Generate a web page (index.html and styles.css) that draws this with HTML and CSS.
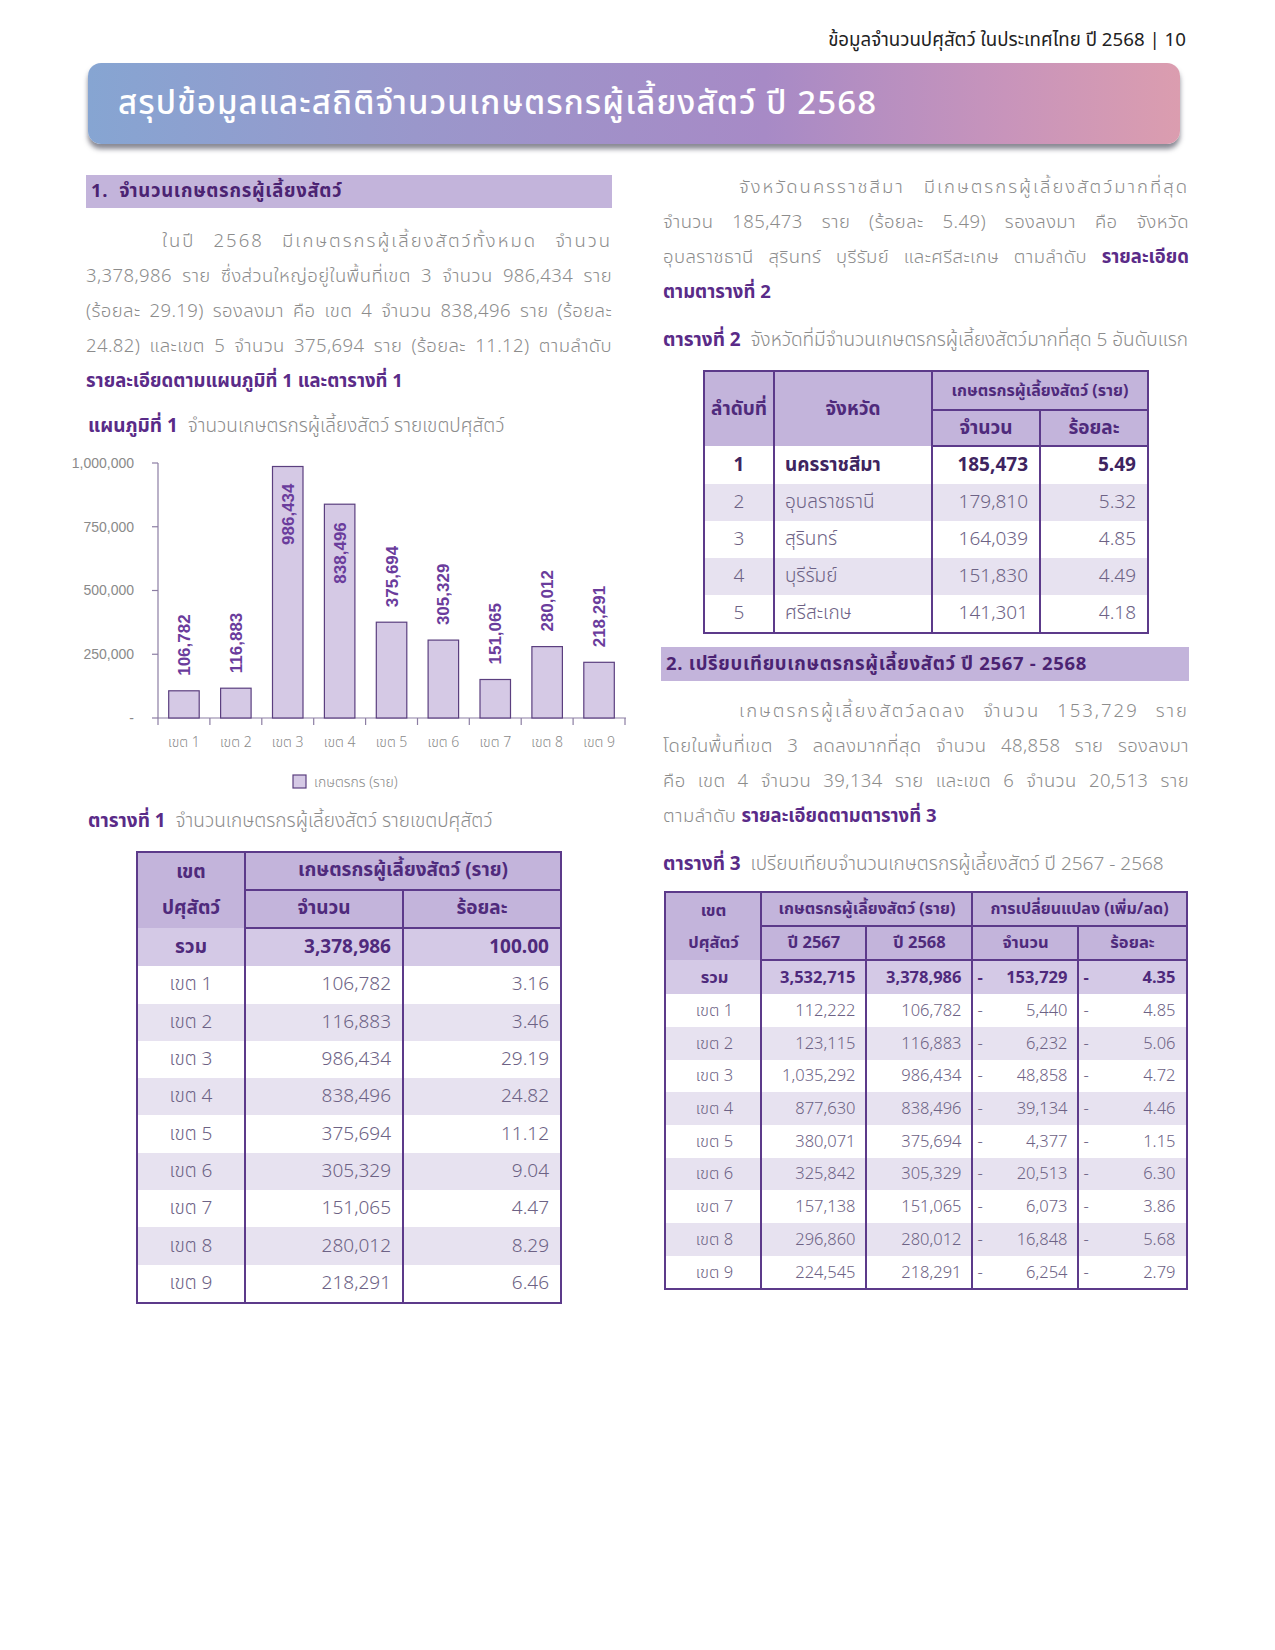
FILE: index.html
```html
<!DOCTYPE html>
<html lang="th">
<head>
<meta charset="utf-8">
<link rel="stylesheet" href="styles.css">
<title>สรุปข้อมูลและสถิติจำนวนเกษตรกรผู้เลี้ยงสัตว์ ปี 2568</title>
</head>
<body>
<div class="page">
  <div class="runhead">ข้อมูลจำนวนปศุสัตว์ ในประเทศไทย ปี 2568 | 10</div>
  <div class="banner"><h1>สรุปข้อมูลและสถิติจำนวนเกษตรกรผู้เลี้ยงสัตว์ ปี 2568</h1></div>

  <div class="cols">
    <div class="col left">
      <div class="secbar">1.&nbsp; จำนวนเกษตรกรผู้เลี้ยงสัตว์</div>
      <div class="para">
        <span class="ln first sparse">ในปี 2568 มีเกษตรกรผู้เลี้ยงสัตว์ทั้งหมด จำนวน</span>
        <span class="ln">3,378,986 ราย ซึ่งส่วนใหญ่อยู่ในพื้นที่เขต 3 จำนวน 986,434 ราย</span>
        <span class="ln">(ร้อยละ 29.19) รองลงมา คือ เขต 4 จำนวน 838,496 ราย (ร้อยละ</span>
        <span class="ln">24.82) และเขต 5 จำนวน 375,694 ราย (ร้อยละ 11.12) ตามลำดับ</span>
        <span class="ln last"><b>รายละเอียดตามแผนภูมิที่ 1 และตารางที่ 1</b></span>
      </div>
      <div class="caption cap-chart"><b>แผนภูมิที่ 1</b>&nbsp; จำนวนเกษตรกรผู้เลี้ยงสัตว์ รายเขตปศุสัตว์</div>
      <svg class="chart" width="580" height="355" viewBox="0 0 580 355">
        <g class="ylab">
          <text x="74" y="24">1,000,000</text>
          <text x="74" y="88">750,000</text>
          <text x="74" y="151">500,000</text>
          <text x="74" y="215">250,000</text>
          <text x="74" y="279">-</text>
        </g>
        <g class="axis">
          <line x1="98" y1="19" x2="98" y2="281"/>
          <line x1="98" y1="274" x2="566" y2="274"/>
          <line x1="92" y1="19" x2="98" y2="19"/>
          <line x1="92" y1="82.75" x2="98" y2="82.75"/>
          <line x1="92" y1="146.5" x2="98" y2="146.5"/>
          <line x1="92" y1="210.25" x2="98" y2="210.25"/>
          <line x1="92" y1="274" x2="98" y2="274"/>
          <line x1="149.9" y1="274" x2="149.9" y2="281"/>
          <line x1="201.8" y1="274" x2="201.8" y2="281"/>
          <line x1="253.7" y1="274" x2="253.7" y2="281"/>
          <line x1="305.6" y1="274" x2="305.6" y2="281"/>
          <line x1="357.5" y1="274" x2="357.5" y2="281"/>
          <line x1="409.3" y1="274" x2="409.3" y2="281"/>
          <line x1="461.2" y1="274" x2="461.2" y2="281"/>
          <line x1="513.1" y1="274" x2="513.1" y2="281"/>
          <line x1="565" y1="274" x2="565" y2="281"/>
        </g>
        <g class="bars">
          <rect x="108.7" y="246.8" width="30.5" height="27.2"/>
          <rect x="160.6" y="244.2" width="30.5" height="29.8"/>
          <rect x="212.5" y="22.5" width="30.5" height="251.5"/>
          <rect x="264.4" y="60.2" width="30.5" height="213.8"/>
          <rect x="316.3" y="178.2" width="30.5" height="95.8"/>
          <rect x="368.1" y="196.1" width="30.5" height="77.9"/>
          <rect x="420.0" y="235.5" width="30.5" height="38.5"/>
          <rect x="471.9" y="202.6" width="30.5" height="71.4"/>
          <rect x="523.8" y="218.3" width="30.5" height="55.7"/>
        </g>
        <g class="vlab">
          <text class="out" transform="translate(130,231.8) rotate(-90)">106,782</text>
          <text class="out" transform="translate(181.8,229.2) rotate(-90)">116,883</text>
          <text class="in" transform="translate(233.7,39.5) rotate(-90)">986,434</text>
          <text class="in" transform="translate(285.6,78.2) rotate(-90)">838,496</text>
          <text class="out" transform="translate(337.5,163.2) rotate(-90)">375,694</text>
          <text class="out" transform="translate(389.4,181.1) rotate(-90)">305,329</text>
          <text class="out" transform="translate(441.3,220.5) rotate(-90)">151,065</text>
          <text class="out" transform="translate(493.2,187.6) rotate(-90)">280,012</text>
          <text class="out" transform="translate(545.1,203.3) rotate(-90)">218,291</text>
        </g>
        <g class="xlab">
          <text x="123.9" y="303">เขต 1</text>
          <text x="175.8" y="303">เขต 2</text>
          <text x="227.7" y="303">เขต 3</text>
          <text x="279.6" y="303">เขต 4</text>
          <text x="331.5" y="303">เขต 5</text>
          <text x="383.4" y="303">เขต 6</text>
          <text x="435.3" y="303">เขต 7</text>
          <text x="487.2" y="303">เขต 8</text>
          <text x="539.1" y="303">เขต 9</text>
        </g>
        <rect class="legbox" x="233" y="331" width="13" height="13"/>
        <text class="legtext" x="254" y="343">เกษตรกร (ราย)</text>
      </svg>
      <div class="caption cap-t1"><b>ตารางที่ 1</b>&nbsp; จำนวนเกษตรกรผู้เลี้ยงสัตว์ รายเขตปศุสัตว์</div>
      <table class="tbl t1">
        <colgroup><col class="c1"><col class="c2"><col class="c3"></colgroup>
        <thead>
          <tr><th rowspan="2">เขต<br>ปศุสัตว์</th><th colspan="2" class="grp">เกษตรกรผู้เลี้ยงสัตว์ (ราย)</th></tr>
          <tr><th>จำนวน</th><th>ร้อยละ</th></tr>
        </thead>
        <tbody>
          <tr class="total"><td class="ctr">รวม</td><td class="num">3,378,986</td><td class="num">100.00</td></tr>
          <tr><td class="ctr">เขต 1</td><td class="num">106,782</td><td class="num">3.16</td></tr>
          <tr><td class="ctr">เขต 2</td><td class="num">116,883</td><td class="num">3.46</td></tr>
          <tr><td class="ctr">เขต 3</td><td class="num">986,434</td><td class="num">29.19</td></tr>
          <tr><td class="ctr">เขต 4</td><td class="num">838,496</td><td class="num">24.82</td></tr>
          <tr><td class="ctr">เขต 5</td><td class="num">375,694</td><td class="num">11.12</td></tr>
          <tr><td class="ctr">เขต 6</td><td class="num">305,329</td><td class="num">9.04</td></tr>
          <tr><td class="ctr">เขต 7</td><td class="num">151,065</td><td class="num">4.47</td></tr>
          <tr><td class="ctr">เขต 8</td><td class="num">280,012</td><td class="num">8.29</td></tr>
          <tr><td class="ctr">เขต 9</td><td class="num">218,291</td><td class="num">6.46</td></tr>
        </tbody>
      </table>
    </div>

    <div class="col right">
      <div class="para">
        <span class="ln first sparse">จังหวัดนครราชสีมา มีเกษตรกรผู้เลี้ยงสัตว์มากที่สุด</span>
        <span class="ln">จำนวน 185,473 ราย (ร้อยละ 5.49) รองลงมา คือ จังหวัด</span>
        <span class="ln">อุบลราชธานี สุรินทร์ บุรีรัมย์ และศรีสะเกษ ตามลำดับ <b>รายละเอียด</b></span>
        <span class="ln last"><b>ตามตารางที่ 2</b></span>
      </div>
      <div class="caption cap-t2"><b>ตารางที่ 2</b>&nbsp; จังหวัดที่มีจำนวนเกษตรกรผู้เลี้ยงสัตว์มากที่สุด 5 อันดับแรก</div>
      <table class="tbl t2">
        <colgroup><col class="c1"><col class="c2"><col class="c3"><col class="c4"></colgroup>
        <thead>
          <tr><th rowspan="2">ลำดับที่</th><th rowspan="2">จังหวัด</th><th colspan="2" class="grp small">เกษตรกรผู้เลี้ยงสัตว์ (ราย)</th></tr>
          <tr><th>จำนวน</th><th>ร้อยละ</th></tr>
        </thead>
        <tbody>
          <tr class="top"><td class="ctr">1</td><td class="name">นครราชสีมา</td><td class="num">185,473</td><td class="num">5.49</td></tr>
          <tr><td class="ctr">2</td><td class="name">อุบลราชธานี</td><td class="num">179,810</td><td class="num">5.32</td></tr>
          <tr><td class="ctr">3</td><td class="name">สุรินทร์</td><td class="num">164,039</td><td class="num">4.85</td></tr>
          <tr><td class="ctr">4</td><td class="name">บุรีรัมย์</td><td class="num">151,830</td><td class="num">4.49</td></tr>
          <tr><td class="ctr">5</td><td class="name">ศรีสะเกษ</td><td class="num">141,301</td><td class="num">4.18</td></tr>
        </tbody>
      </table>

      <div class="secbar sec2">2. เปรียบเทียบเกษตรกรผู้เลี้ยงสัตว์ ปี 2567 - 2568</div>
      <div class="para">
        <span class="ln first sparse">เกษตรกรผู้เลี้ยงสัตว์ลดลง จำนวน 153,729 ราย</span>
        <span class="ln">โดยในพื้นที่เขต 3 ลดลงมากที่สุด จำนวน 48,858 ราย รองลงมา</span>
        <span class="ln">คือ เขต 4 จำนวน 39,134 ราย และเขต 6 จำนวน 20,513 ราย</span>
        <span class="ln last">ตามลำดับ <b>รายละเอียดตามตารางที่ 3</b></span>
      </div>
      <div class="caption cap-t3"><b>ตารางที่ 3</b>&nbsp; เปรียบเทียบจำนวนเกษตรกรผู้เลี้ยงสัตว์ ปี 2567 - 2568</div>
      <table class="tbl t3">
        <colgroup><col class="c1"><col class="c2"><col class="c3"><col class="c4"><col class="c5"></colgroup>
        <thead>
          <tr><th rowspan="2">เขต<br>ปศุสัตว์</th><th colspan="2" class="grp">เกษตรกรผู้เลี้ยงสัตว์ (ราย)</th><th colspan="2" class="grp">การเปลี่ยนแปลง (เพิ่ม/ลด)</th></tr>
          <tr><th>ปี 2567</th><th>ปี 2568</th><th>จำนวน</th><th>ร้อยละ</th></tr>
        </thead>
        <tbody>
          <tr class="total"><td class="ctr">รวม</td><td class="num">3,532,715</td><td class="num">3,378,986</td><td class="num"><span class="dash">-</span>153,729</td><td class="num"><span class="dash">-</span>4.35</td></tr>
          <tr><td class="ctr">เขต 1</td><td class="num">112,222</td><td class="num">106,782</td><td class="num"><span class="dash">-</span>5,440</td><td class="num"><span class="dash">-</span>4.85</td></tr>
          <tr><td class="ctr">เขต 2</td><td class="num">123,115</td><td class="num">116,883</td><td class="num"><span class="dash">-</span>6,232</td><td class="num"><span class="dash">-</span>5.06</td></tr>
          <tr><td class="ctr">เขต 3</td><td class="num">1,035,292</td><td class="num">986,434</td><td class="num"><span class="dash">-</span>48,858</td><td class="num"><span class="dash">-</span>4.72</td></tr>
          <tr><td class="ctr">เขต 4</td><td class="num">877,630</td><td class="num">838,496</td><td class="num"><span class="dash">-</span>39,134</td><td class="num"><span class="dash">-</span>4.46</td></tr>
          <tr><td class="ctr">เขต 5</td><td class="num">380,071</td><td class="num">375,694</td><td class="num"><span class="dash">-</span>4,377</td><td class="num"><span class="dash">-</span>1.15</td></tr>
          <tr><td class="ctr">เขต 6</td><td class="num">325,842</td><td class="num">305,329</td><td class="num"><span class="dash">-</span>20,513</td><td class="num"><span class="dash">-</span>6.30</td></tr>
          <tr><td class="ctr">เขต 7</td><td class="num">157,138</td><td class="num">151,065</td><td class="num"><span class="dash">-</span>6,073</td><td class="num"><span class="dash">-</span>3.86</td></tr>
          <tr><td class="ctr">เขต 8</td><td class="num">296,860</td><td class="num">280,012</td><td class="num"><span class="dash">-</span>16,848</td><td class="num"><span class="dash">-</span>5.68</td></tr>
          <tr><td class="ctr">เขต 9</td><td class="num">224,545</td><td class="num">218,291</td><td class="num"><span class="dash">-</span>6,254</td><td class="num"><span class="dash">-</span>2.79</td></tr>
        </tbody>
      </table>
    </div>
  </div>
</div>
</body>
</html>
```

FILE: styles.css
```css
html, body {
  margin: 0;
  padding: 0;
  background: #ffffff;
}
body {
  font-family: "Noto Sans Thai", "Noto Sans Thai UI", "Loma", "Garuda", "Noto Sans", "Liberation Sans", sans-serif;
  color: #8a8a8a;
}
.page {
  width: 1275px;
  height: 1650px;
  position: relative;
}
.runhead {
  padding-top: 28px;
  height: 24px;
  line-height: 24px;
  text-align: right;
  padding-right: 89px;
  font-size: 18.7px;
  color: #222222;
}
.banner {
  margin: 11px 95px 0 88px;
  height: 81px;
  border-radius: 13px;
  background: linear-gradient(90deg, #86a5d2 0%, #9a97cb 30%, #a78ac6 62%, #c894bb 84%, #db9daf 100%);
  box-shadow: 0 5px 5px rgba(40, 40, 60, 0.55);
  display: flex;
  align-items: center;
}
.banner h1 {
  margin: 0 0 0 30px;
  font-size: 33px;
  font-weight: 500;
  color: #ffffff;
  letter-spacing: 1.1px;
}
.cols {
  display: flex;
  gap: 51px;
  padding-left: 86px;
  margin-top: 25px;
}
.col {
  width: 526px;
  display: flex;
  flex-direction: column;
}
.left {
  padding-top: 6px;
}
.right {
  padding-top: 1px;
}
.secbar {
  height: 33px;
  line-height: 33px;
  background: #c3b4db;
  color: #4b2372;
  font-weight: 700;
  font-size: 18.5px;
  letter-spacing: 0.7px;
  padding-left: 5px;
}
.sec2 {
  margin-top: 13px;
  height: 34px;
  line-height: 34px;
  margin-left: -2px;
}
.para {
  margin-top: 16px;
  font-size: 18.5px;
  line-height: 35px;
  color: #8c8c8c;
  font-weight: 300;
}
.right .para {
  margin-top: 0;
}
.sec2 + .para {
  margin-top: 13px;
}
.ln {
  display: block;
  text-align: justify;
  text-align-last: justify;
  white-space: nowrap;
  letter-spacing: 0.4px;
}
.ln.sparse {
  letter-spacing: 2px;
}
.ln.first {
  padding-left: 76px;
}
.ln.last {
  text-align-last: left;
}
.para b {
  color: #5a2b88;
  font-weight: 700;
  letter-spacing: 0;
}
.caption {
  font-size: 19px;
  line-height: 35px;
  color: #8c8c8c;
  font-weight: 300;
  white-space: nowrap;
}
.caption b {
  color: #5a2b88;
  font-weight: 700;
}
.cap-chart {
  margin-top: 10px;
  padding-left: 2px;
}
.cap-t1 {
  margin-top: 5px;
  padding-left: 2px;
}
.cap-t2 {
  margin-top: 13px;
}
.cap-t3 {
  margin-top: 13px;
}
.chart {
  display: block;
  margin-left: -26px;
  overflow: visible;
}
.chart text {
  font-family: "Noto Sans Thai", "Loma", "Liberation Sans", sans-serif;
}
.ylab text {
  font-family: "Liberation Sans", sans-serif;
  font-size: 14px;
  fill: #8a8a8a;
  text-anchor: end;
}
.axis line {
  stroke: #8c7ea3;
  stroke-width: 1.2;
}
.bars rect, .legbox {
  fill: #d5c9e5;
  stroke: #5b3f7f;
  stroke-width: 1.2;
}
.vlab text {
  font-family: "Liberation Sans", sans-serif !important;
  font-size: 17px;
  font-weight: 700;
  fill: #6a3c9c;
}
.vlab .out { text-anchor: start; }
.vlab .in { text-anchor: end; }
.xlab text {
  font-size: 14px;
  fill: #8a8a8a;
  text-anchor: middle;
  font-weight: 300;
}
.legtext {
  font-size: 14px;
  fill: #8a8a8a;
  font-weight: 300;
}

/* tables */
.tbl {
  border-collapse: collapse;
  border: 2px solid #5c3a8a;
  table-layout: fixed;
  align-self: center;
}
.tbl th {
  background: #c3b4db;
  color: #4f2a7c;
  font-weight: 700;
  padding: 0;
  text-align: center;
  border-left: 2px solid #5c3a8a;
  border-right: 2px solid #5c3a8a;
}
.tbl thead tr:last-child th {
  border-top: 2px solid #5c3a8a;
  border-bottom: 2px solid #5c3a8a;
}
.tbl td {
  padding: 0 11px;
  border-left: 2px solid #5c3a8a;
  border-right: 2px solid #5c3a8a;
  color: #6d6285;
  font-weight: 300;
  white-space: nowrap;
}
.tbl tbody tr:nth-child(odd) td {
  background: #e7e2f0;
}
.tbl tbody tr.total td {
  background: #d4c9e6;
  color: #4f2a7c;
  font-weight: 700;
}
.ctr { text-align: center; }
.num { text-align: right; }
.name { text-align: left; }

.t1 {
  width: 424px;
  font-size: 19px;
  margin-top: 12px;
}
.t1 .c1 { width: 108px; }
.t1 .c2 { width: 158px; }
.t1 .c3 { width: 158px; }
.t1 thead tr th { height: 36px; line-height: 36px; }
.t1 td { height: 37.3px; }

.t2 {
  width: 444px;
  font-size: 19px;
  margin-top: 12px;
}
.t2 .c1 { width: 70px; }
.t2 .c2 { width: 158px; }
.t2 .c3 { width: 108px; }
.t2 .c4 { width: 108px; }
.t2 thead tr:first-child th { height: 37px; }
.t2 thead tr:last-child th { height: 34px; }
.t2 th.small { font-size: 16px; }
.t2 tbody tr:nth-child(odd) td { background: #ffffff; }
.t2 tbody tr:nth-child(even) td { background: #e7e2f0; }
.t2 td { height: 37.1px; }
.t2 td.name { padding-left: 10px; }
.t2 tr.top td { color: #3e2460; font-weight: 700; }

.t3 {
  width: 521px;
  font-size: 16.5px;
  margin-top: 9px;
}
.t3 .c1 { width: 96px; }
.t3 .c2 { width: 105px; }
.t3 .c3 { width: 106px; }
.t3 .c4 { width: 106px; }
.t3 .c5 { width: 108px; }
.t3 thead tr th { height: 32px; line-height: 32px; }
.t3 th.grp { font-size: 16px; }
.t3 td { height: 32.7px; padding: 0 10px 0 12px; }
.t3 td .dash { float: left; margin-left: -8px; }
```
